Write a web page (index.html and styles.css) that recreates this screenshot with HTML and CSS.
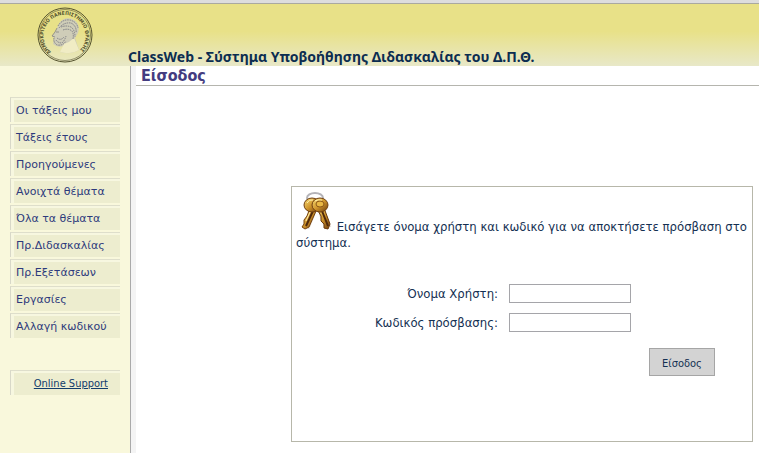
FILE: index.html
```
<!DOCTYPE html>
<html lang="el">
<head>
  <meta charset="UTF-8">
  <meta name="viewport" content="width=device-width, initial-scale=1">
  <title>ClassWeb - Είσοδος</title>
  <link rel="stylesheet" href="styles.css">
</head>
<body>

  <header class="header">
    <svg class="logo" viewBox="0 0 56 56" role="img" aria-label="Δημοκρίτειο Πανεπιστήμιο Θράκης">
      <defs>
        <path id="ring" d="M14 45 A21 21 0 1 1 43 43"/>
      </defs>
      <g fill="none" stroke="#55532f">
        <circle cx="28" cy="28" r="27" stroke-width="1"/>
        <circle cx="28" cy="28" r="25.5" stroke-width=".6"/>
      </g>
      <text class="logo-text"><textPath href="#ring">ΔΗΜΟΚΡΙΤΕΙΟ ΠΑΝΕΠΙΣΤΗΜΙΟ ΘΡΑΚΗΣ</textPath></text>
      <path d="M21 19 C23 12 30 10 35 12 C41 14 43 20 41 26 L38 31 L42 43 Q34 48 23 45 L29 37 C25 41 20 40 16 37 L17 31 L15 29 L18 25 Z" fill="#cfcdb8"/>
      <path d="M27 37 Q33 35 37 31 L42 43 Q34 48 23 45 Z" fill="#f0ecc4"/>
      <g fill="none" stroke="#808086" stroke-width="1" stroke-dasharray="1.5 .8">
        <path d="M21 19 Q25 12 33 13 Q40 15 41 21"/>
        <path d="M22 21 Q27 15 34 16 Q40 19 39 26"/>
        <path d="M24 20 Q29 18 34 20 Q38 23 38 30"/>
        <path d="M26 23 Q31 21 35 24 Q37 27 36 32"/>
        <path d="M17 31 Q16 35 20 38 Q26 39 29 34"/>
        <path d="M19 33 Q21 36 25 36 Q28 33 29 29"/>
        <path d="M20 31 Q24 34 27 30"/>
      </g>
      <path d="M20 21 L18 25 L15 29 L18 30 M19 25 L22 25" fill="none" stroke="#85847e" stroke-width=".8"/>
    </svg>
    <div class="site-title">ClassWeb - Σύστημα Υποβοήθησης Διδασκαλίας του Δ.Π.Θ.</div>
  </header>

  <div class="page">
    <nav class="sidebar">
      <ul class="menu">
        <li><a href="#">Οι τάξεις μου</a></li>
        <li><a href="#">Τάξεις έτους</a></li>
        <li><a href="#">Προηγούμενες</a></li>
        <li><a href="#">Ανοιχτά θέματα</a></li>
        <li><a href="#">Όλα τα θέματα</a></li>
        <li><a href="#">Πρ.Διδασκαλίας</a></li>
        <li><a href="#">Πρ.Εξετάσεων</a></li>
        <li><a href="#">Εργασίες</a></li>
        <li><a href="#">Αλλαγή κωδικού</a></li>
      </ul>
      <div class="support"><a href="#">Online Support</a></div>
    </nav>

    <main class="content">
      <h1>Είσοδος</h1>

      <form class="login">
        <p class="intro">
          <svg class="keys" viewBox="0 0 37 40" aria-hidden="true">
            <defs>
              <linearGradient id="gold" x1="0" y1="0" x2="1" y2="1">
                <stop offset="0" stop-color="#f9df79"/>
                <stop offset=".5" stop-color="#cf942b"/>
                <stop offset="1" stop-color="#6b3a0d"/>
              </linearGradient>
            </defs>
            <path d="M10 37 L17 20 M32 37 L26 22" stroke="#e6dfd8" stroke-width="7"/>
            <ellipse cx="19" cy="7" rx="8" ry="5" fill="none" stroke="#b4b3b8" stroke-width="2"/>
            <path d="M14 17 L20 20 L13 36 L9 38 L6 36 L8 33 L8 29 L11 25 Z" fill="url(#gold)" stroke="#75420f"/>
            <path d="M21 18 L28 17 L34 33 L32 38 L28 37 L28 33 L25 30 L25 25 Z" fill="url(#gold)" stroke="#6a390d"/>
            <path d="M17 20 L10 35 M26 20 L32 35" stroke="#4f290d" stroke-width="2"/>
            <ellipse cx="16" cy="14" rx="8" ry="7" fill="url(#gold)" stroke="#704013"/>
            <ellipse cx="24" cy="14" rx="8" ry="7" fill="url(#gold)" stroke="#704013"/>
            <ellipse cx="24" cy="13" rx="4" ry="3" fill="#e9b845" stroke="#8c5719"/>
            <path d="M11 12 Q13 8 17 9 M19 10 Q22 8 26 9 M14 21 L10 30" fill="none" stroke="#fff0ac" stroke-width="1"/>
          </svg>
          Εισάγετε όνομα χρήστη και κωδικό για να αποκτήσετε πρόσβαση στο σύστημα.
        </p>

        <div class="fields">
          <label for="username">Όνομα Χρήστη:</label>
          <input type="text" id="username" name="username">
          <label for="password">Κωδικός πρόσβασης:</label>
          <input type="password" id="password" name="password">
        </div>

        <div class="actions">
          <button type="submit">Είσοδος</button>
        </div>
      </form>
    </main>
  </div>

</body>
</html>
```
FILE: styles.css
```
* {
  box-sizing: border-box;
}

body {
  margin: 0;
  min-height: 100vh;
  display: flex;
  flex-direction: column;
  font-family: Tahoma, "DejaVu Sans Condensed", sans-serif;
  font-size: 13px;
  line-height: 16px;
  color: #143052;
  background: #fff;
}

/* header */
.header {
  display: flex;
  align-items: flex-end;
  gap: 35px;
  height: 66px;
  padding-left: 37px;
  border-top: 3px solid #ddd;
  background: linear-gradient(#e8e188 45%, #e8e8c8);
  box-shadow: inset 0 1px #aaa9a0;
}

.logo {
  width: 56px;
  height: 56px;
  margin-bottom: 3px;
}

.logo-text {
  font-size: 5px;
  font-weight: bold;
  fill: #55532f;
}

.site-title {
  font-family: Tahoma, "Noto Sans", sans-serif;
  font-size: 14px;
  font-weight: bold;
  line-height: 18px;
  color: #0c2d50;
}

/* sidebar */
.page {
  display: flex;
  flex: 1;
}

.sidebar {
  width: 131px;
  flex-shrink: 0;
  padding: 31px 10px 16px;
  border-right: 1px solid #aaa;
  background: #f9f8dc;
}

.menu {
  list-style: none;
  margin: 0 0 32px;
  padding: 0;
}

.menu li {
  margin-bottom: 2px;
}

.menu a,
.support {
  display: block;
  height: 25px;
  padding: 5px 5px 3px;
  border-top: 1px solid #dedecb;
  border-left: 1px solid #d8d8c8;
  box-shadow: inset 3px 2px #f7f7e0;
  background: #ededcf;
  font-family: Verdana, "DejaVu Sans", sans-serif;
  font-size: 11px;
  line-height: 16px;
  color: #2d3a7c;
  text-decoration: none;
}

.support {
  text-align: right;
  padding-right: 12px;
  font-family: Tahoma, "DejaVu Sans Condensed", sans-serif;
}

.support a {
  color: #123c6c;
}

/* content */
.content {
  flex: 1;
  min-width: 0;
  border-left: 5px solid #f4f4f4;
}

h1 {
  margin: 0;
  padding-left: 5px;
  border-bottom: 1px solid #b5b5ae;
  font-size: 16px;
  line-height: 19px;
  color: #443c80;
}

.login {
  min-height: 256px;
  margin: 100px 6px 10px 155px;
  padding: 4px;
  border: 1px solid #b7b7aa;
}

.intro {
  margin: 0 0 33px;
}

.keys {
  width: 37px;
  height: 40px;
}

.fields {
  display: grid;
  grid-template-columns: 202px 122px;
  column-gap: 11px;
  row-gap: 10px;
  align-items: center;
}

.fields label {
  text-align: right;
}

.fields input {
  height: 19px;
  border: 1px solid #a5a5a9;
  background: #fff;
}

.actions {
  display: flex;
  justify-content: flex-end;
  margin-top: 16px;
  padding-right: 33px;
}

button {
  width: 66px;
  height: 28px;
  padding: 2px 0 0;
  border: 1px solid #a5a5a5;
  background: #d3d3d3;
  font-family: inherit;
  font-size: 11px;
  color: #143052;
}
```
